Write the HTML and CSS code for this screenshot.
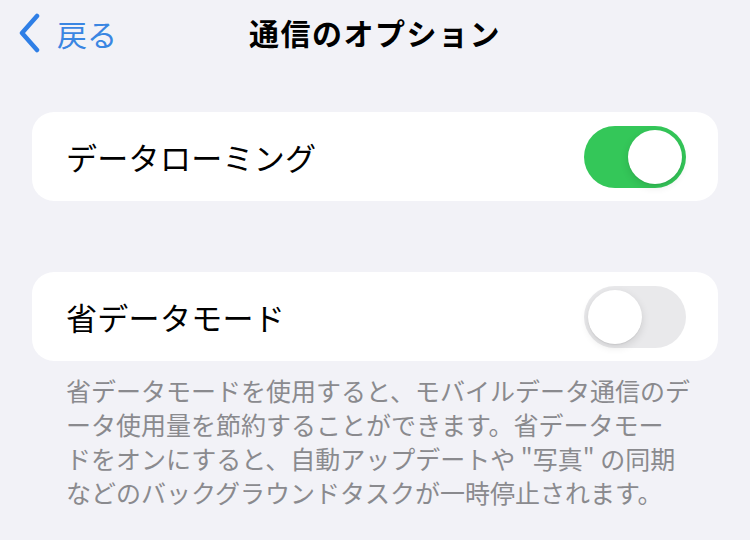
FILE: index.html
```html
<!DOCTYPE html>
<html lang="ja">
<head>
<meta charset="utf-8">
<link rel="stylesheet" href="styles.css">
</head>
<body>
<div class="page">
  <header class="nav">
    <div class="back">
      <svg class="chev" width="24" height="40" viewBox="0 0 24 40"><path d="M20 3 L5 20 L20 37" fill="none" stroke="#2f7fe6" stroke-width="4.5" stroke-linecap="round" stroke-linejoin="round"/></svg>
      <span class="back-text">戻る</span>
    </div>
    <h1 class="title">通信のオプション</h1>
  </header>

  <section class="card first">
    <span class="label">データローミング</span>
    <span class="toggle on"><span class="thumb"></span></span>
  </section>

  <section class="card second">
    <span class="label">省データモード</span>
    <span class="toggle off"><span class="thumb"></span></span>
  </section>

  <p class="footnote">
    <span class="ln">省データモードを使用すると、モバイルデータ通信のデ</span>
    <span class="ln">ータ使用量を節約することができます。省データモー</span>
    <span class="ln">ドをオンにすると、自動アップデートや "写真" の同期</span>
    <span class="ln">などのバックグラウンドタスクが一時停止されます。</span>
  </p>
</div>
</body>
</html>
```

FILE: styles.css
```css
html, body {
  margin: 0;
  padding: 0;
  background: #f2f2f7;
}
body {
  width: 750px;
  height: 540px;
  overflow: hidden;
  font-family: "Noto Sans CJK JP", "Noto Sans", sans-serif;
}
.page {
  display: flex;
  flex-direction: column;
  padding: 0 32px;
}
.nav {
  position: relative;
  height: 66px;
  display: flex;
  align-items: center;
  justify-content: center;
}
.back {
  position: absolute;
  left: -15px;
  top: 13px;
  display: flex;
  align-items: center;
  gap: 16px;
}
.chev { display: block; }
.back-text {
  color: #3a86e2;
  font-size: 30px;
  line-height: 40px;
}
.title {
  margin: 0;
  font-size: 30px;
  font-weight: 700;
  color: #000;
  line-height: 40px;
  letter-spacing: 1.5px;
  margin-left: 0;
  margin-top: -2px;
}
.card {
  background: #fff;
  border-radius: 22px;
  height: 89px;
  display: flex;
  align-items: center;
  justify-content: space-between;
  padding: 0 32px 0 34px;
}
.card.first { margin-top: 46px; }
.card.second { margin-top: 71px; }
.label {
  font-size: 31px;
  color: #000;
  letter-spacing: 0.3px;
}
.toggle {
  width: 102px;
  height: 62px;
  border-radius: 31px;
  display: flex;
  align-items: center;
  padding: 0 4px;
  box-sizing: border-box;
}
.toggle.on {
  background: #34c759;
  justify-content: flex-end;
}
.toggle.off {
  background: #e9e9eb;
  justify-content: flex-start;
}
.thumb {
  width: 54px;
  height: 54px;
  border-radius: 50%;
  background: #fff;
  box-shadow: 0 3px 8px rgba(0,0,0,0.12), 0 1px 1px rgba(0,0,0,0.06);
}
.footnote {
  margin: 12px 0 0 0;
  padding: 0 34px;
  color: #8a8a8e;
  font-size: 25px;
  line-height: 34px;
}
.ln { display: block; white-space: nowrap; }
```
